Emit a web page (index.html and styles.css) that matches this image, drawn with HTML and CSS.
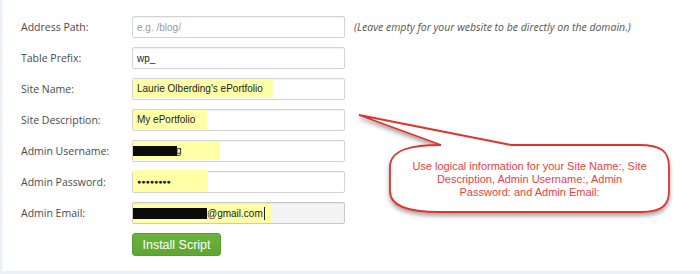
FILE: index.html
```
<html>
	<head>
		<link rel="stylesheet" href="styles.css">
	</head>
	<body>
		<div class="panel">
			<div class="install-form">
				<div class="form-row">
					<label class="form-label">Address Path:</label>
					<div class="field"><span class="placeholder">e.g. /blog/</span></div>
					<span class="hint">(Leave empty for your website to be directly on the domain.)</span>
				</div>
				<div class="form-row">
					<label class="form-label">Table Prefix:</label>
					<div class="field">wp_</div>
				</div>
				<div class="form-row">
					<label class="form-label">Site Name:</label>
					<div class="field"><span class="hl hl-name">Laurie Olberding's ePortfolio</span></div>
				</div>
				<div class="form-row">
					<label class="form-label">Site Description:</label>
					<div class="field"><span class="hl hl-desc">My ePortfolio</span></div>
				</div>
				<div class="form-row">
					<label class="form-label">Admin Username:</label>
					<div class="field"><span class="hl hl-user"><span class="blackout blackout-user"></span>g</span></div>
				</div>
				<div class="form-row">
					<label class="form-label">Admin Password:</label>
					<div class="field"><span class="hl hl-pass"><span class="dots">&#9679;&#9679;&#9679;&#9679;&#9679;&#9679;&#9679;&#9679;</span></span></div>
				</div>
				<div class="form-row">
					<label class="form-label">Admin Email:</label>
					<div class="field field-focus"><span class="hl hl-mail"><span class="blackout blackout-mail"></span>@gmail.com<span class="caret"></span></span></div>
				</div>
				<div class="form-row">
					<span class="form-label"></span>
					<button class="btn-install">Install Script</button>
				</div>
			</div>

			<div class="callout">
				<svg width="330" height="120" viewBox="0 0 330 120">
					<defs>
						<filter id="shadow" x="-10%" y="-10%" width="120%" height="140%">
							<feDropShadow dx="0" dy="3" stdDeviation="2" flood-color="#000" flood-opacity="0.35"/>
						</filter>
					</defs>
					<path d="M8 10 L90 40 C62 40 39 44 39 62 L39 86 C39 101 56 107 88 107 L290 107 C311 107 318 100 318 86 L318 62 C318 46 310 40 288 40 L160 40 Z" fill="#fff" stroke="#e0332f" stroke-width="1.8" filter="url(#shadow)"/>
				</svg>
				<div class="callout-text">Use logical information for your Site Name:, Site<br>Description, Admin Username:, Admin<br>Password: and Admin Email:</div>
			</div>
		</div>
	</body>
</html>
```

FILE: styles.css
```
html,body{
	margin:0;
	padding:0;
}
body{
	background:#eaf1f7;
	width:700px;
	height:274px;
	overflow:hidden;
}
.panel{
	position:relative;
	margin-left:2px;
	height:271px;
	background:#fff;
	box-sizing:border-box;
	border-left:1px solid #f2f6f9;
	padding:16px 0 0 18px;
}
.install-form{
	display:flex;
	flex-direction:column;
	gap:9px;
}
.form-row{
	display:flex;
	align-items:center;
	height:22px;
}
.form-label{
	width:111px;
	flex:none;
	font-family:"Open Sans",sans-serif;
	font-size:10.5px;
	color:#4a4a4a;
}
.field{
	width:213px;
	height:22px;
	box-sizing:border-box;
	border:1px solid #d3d3d3;
	border-radius:2px;
	box-shadow:inset 0 1px 1px rgba(0,0,0,0.06);
	background:#fff;
	display:flex;
	align-items:center;
	padding-left:4px;
	font-family:"Liberation Sans",Arial,sans-serif;
	font-size:10px;
	color:#222;
	white-space:nowrap;
}
.field-focus{
	background:#f4f4f4;
	border-color:#c9c9c9;
}
.placeholder{
	color:#999;
}
.hint{
	margin-left:9px;
	font-family:"Open Sans",sans-serif;
	font-style:italic;
	font-size:10.5px;
	color:#555;
}
.hl{
	background:#ffffa6;
	display:flex;
	align-items:center;
	margin-left:-4px;
	padding-left:4px;
	box-sizing:border-box;
	height:19px;
	align-self:flex-start;
	white-space:nowrap;
}
.hl-name{
	width:140px;
}
.hl-desc{
	width:74px;
}
.hl-user{
	width:87px;
	padding-left:0;
}
.hl-pass{
	width:75px;
	height:22px;
	margin-top:-2px;
}
.hl-mail{
	width:138px;
	padding-left:0;
	margin-top:1px;
}
.blackout{
	display:inline-block;
	background:#0b0b0b;
	height:10px;
}
.blackout-user{
	width:44px;
	margin-right:-1px;
}
.blackout-mail{
	width:74px;
	height:11px;
}
.dots{
	font-size:7px;
	letter-spacing:0;
	color:#222;
}
.caret{
	display:inline-block;
	width:1px;
	height:13px;
	background:#222;
	margin-left:1px;
}
.btn-install{
	width:89px;
	height:23px;
	border:1px solid #5a9a33;
	border-radius:3px;
	background:linear-gradient(#6ab43c,#5ea532);
	color:#fff;
	font-family:"Liberation Sans",Arial,sans-serif;
	font-size:12.5px;
	padding:0;
	margin-top:1px;
}
.callout{
	position:absolute;
	left:348px;
	top:105px;
	width:330px;
	height:120px;
}
.callout svg{
	display:block;
}
.callout-text{
	position:absolute;
	left:39px;
	top:55px;
	width:279px;
	text-align:center;
	font-family:"Liberation Sans",Arial,sans-serif;
	font-size:11px;
	line-height:13px;
	color:#e8423f;
}
```
